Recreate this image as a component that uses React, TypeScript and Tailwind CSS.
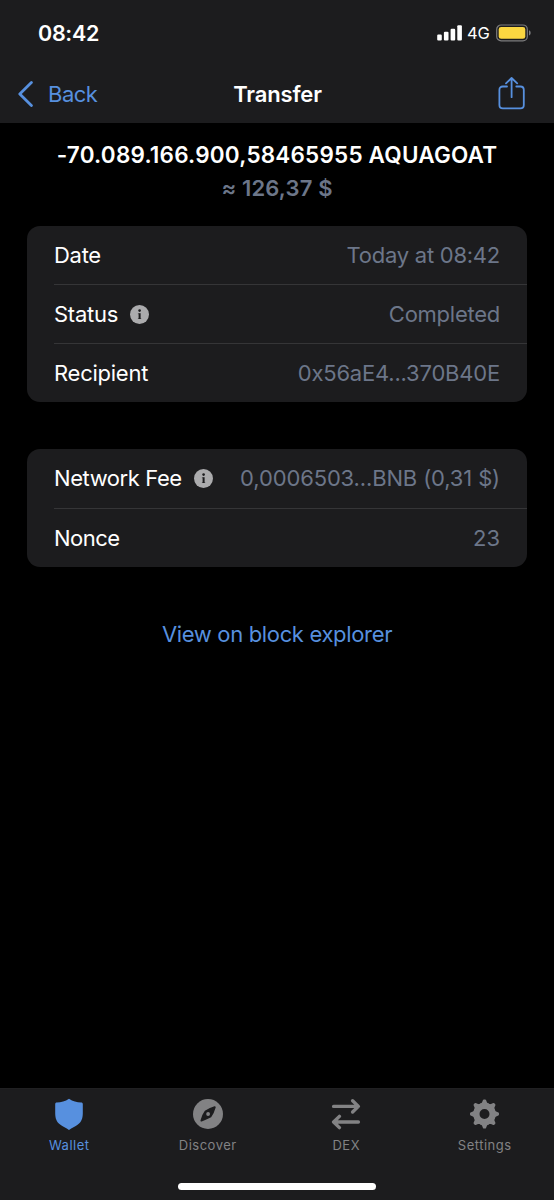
import type { ReactNode } from "react";

interface RowProps {
  label: string;
  value: string;
  info?: boolean;
  labelClass?: string;
  valueClass?: string;
}

function InfoIcon() {
  return (
    <svg width="19" height="19" viewBox="0 0 19 19" className="ml-[12px]">
      <circle cx="9.5" cy="9.5" r="9.5" fill="#ababad" />
      <circle cx="9.6" cy="5.6" r="1.3" fill="#1c1c1e" />
      <path d="M8.6 8.200h2v5.800h-2z" fill="#1c1c1e" />
      <path d="M7.900 8.200h1v1h-1zM7.900 13h3.300v1H7.900z" fill="#1c1c1e" fillOpacity="0.5" />
    </svg>
  );
}

function Row({ label, value, info, labelClass = "", valueClass = "" }: RowProps) {
  return (
    <div className="flex flex-1 items-center justify-between border-t border-[#353537] pr-[27px] first:border-t-0">
      <div className="flex items-center">
        <span className={`text-white ${labelClass}`}>{label}</span>
        {info && <InfoIcon />}
      </div>
      <span className={`text-[#6c7689] ${valueClass}`}>{value}</span>
    </div>
  );
}

function StatusBar() {
  return (
    <div className="flex h-[66px] items-center justify-between pr-[22px] pl-[38px]">
      <span className="text-[21.5px] font-semibold tracking-[-0.3px] text-white">08:42</span>
      <div className="flex items-center">
        <svg width="26" height="16" viewBox="0 0 26 16" fill="#fff">
          <rect x="0.2" y="9.6" width="4.6" height="6" rx="1.1" />
          <rect x="6.9" y="6.7" width="4.6" height="8.9" rx="1.1" />
          <rect x="13.6" y="3.8" width="4.6" height="11.8" rx="1.1" />
          <rect x="20.3" y="0.2" width="4.6" height="15.4" rx="1.1" />
        </svg>
        <span className="mt-px ml-[4px] w-[23px] text-[16.5px] leading-none tracking-[-0.2px] whitespace-nowrap text-white">4G</span>
        <svg width="36" height="18" viewBox="0 0 36 18" className="ml-[6px]">
          <rect x="0.7" y="1" width="30.6" height="15.8" rx="4.4" fill="none" stroke="#7c7c7e" strokeWidth="1.2" />
          <rect x="2.7" y="3" width="26.6" height="11.8" rx="2.4" fill="#fbd741" />
          <path d="M33 6.3c2.2.8 2.2 4.4 0 5.2z" fill="#7c7c7e" />
        </svg>
      </div>
    </div>
  );
}

function NavBar() {
  return (
    <div className="grid h-[56px] grid-cols-[1fr_auto_1fr] items-center pr-[29px] pl-[18px]">
      <div className="flex items-center text-[#5790df]">
        <svg width="16" height="28" viewBox="0 0 16 28" fill="none" stroke="currentColor" strokeWidth="2.8" strokeLinecap="round" strokeLinejoin="round">
          <path d="M13.4 2.6L1.8 14l11.6 11.4" />
        </svg>
        <span className="ml-[14px] tracking-[-0.5px]">Back</span>
      </div>
      <span className="pl-[12px] font-semibold tracking-[-0.15px] text-white">Transfer</span>
      <svg width="27" height="34" viewBox="0 0 27 34" fill="none" stroke="#5790df" strokeWidth="1.8" strokeLinecap="round" strokeLinejoin="round" className="justify-self-end">
        <path d="M9 9.500H4.800C2.700 9.500 1.400 10.800 1.400 12.900v15.100c0 2.1 1.3 3.4 3.4 3.4h17.600c2.1 0 3.4-1.3 3.4-3.4V12.900c0-2.1-1.3-3.4-3.4-3.4h-4.100" />
        <path d="M13.600 20.2V1.200M8 6.400l5.600-5.400 5.600 5.400" />
      </svg>
    </div>
  );
}

function Tab({ label, active, children }: { label: string; active?: boolean; children: ReactNode }) {
  return (
    <div className={`flex flex-col items-center ${active ? "text-[#5790df]" : "text-[#828284]"}`}>
      {children}
      <span className="mt-[5px] text-[13px] leading-[20px] tracking-[0.5px]">{label}</span>
    </div>
  );
}

function TabBar() {
  return (
    <div className="flex h-[112px] flex-col items-center border-t border-[#202022] bg-[#1c1c1e] pt-[9px]">
      <div className="grid w-full grid-cols-4">
        <Tab label="Wallet" active>
          <svg width="32" height="32" viewBox="0 0 32 32" fill="currentColor">
            <path d="M16 .8c3.8 2.6 7.9 3.7 12.2 3.7 1 0 1.6.6 1.6 1.6v9.2c0 5.2-1.4 8.6-4.9 11.3-2.7 2-6.1 3.4-8.9 5.400-2.8-2-6.200-3.400-8.900-5.400-3.500-2.700-4.900-6.100-4.900-11.300V6.100c0-1 .6-1.600 1.600-1.600C8.100 4.500 12.200 3.400 16 .8z" />
          </svg>
        </Tab>
        <Tab label="Discover">
          <svg width="32" height="32" viewBox="0 0 32 32" fill="currentColor">
            <circle cx="16" cy="16" r="15" />
            <path d="M22.800 9.200Q21 15.500 18.600 18.500Q15 20.500 9.400 22.600Q11 16.500 13.400 13.500Q17 11 22.800 9.200z" fill="#1c1c1e" stroke="#1c1c1e" strokeWidth="1.8" strokeLinejoin="round" />
            <circle cx="16.100" cy="16" r="1.900" />
          </svg>
        </Tab>
        <Tab label="DEX">
          <svg width="32" height="32" viewBox="0 0 32 32" fill="none" stroke="currentColor" strokeWidth="3.4" strokeLinecap="round" strokeLinejoin="round">
            <path d="M3.600 8.400h24.600M22.600 2.800l5.800 5.600-5.800 5.600" />
            <path d="M28.400 24H3.800M9.400 18.400L3.600 24l5.800 5.600" />
          </svg>
        </Tab>
        <Tab label="Settings">
          <svg width="32" height="32" viewBox="0.5 0 32 32" fill="none">
            <circle cx="16" cy="16" r="8" stroke="currentColor" strokeWidth="6" />
            <g fill="currentColor" stroke="currentColor" strokeWidth="2" strokeLinejoin="round">
              {[0, 45, 90, 135, 180, 225, 270, 315].map((angle) => (
                <path key={angle} d="M15.400 2.500h1.200l1.200 2.800 2.100 1.400h-7.800l2.100-1.400z" transform={`rotate(${angle} 16 16)`} />
              ))}
            </g>
          </svg>
        </Tab>
      </div>
      <div className="mt-[27.5px] h-[7px] w-[198px] rounded-full bg-white" />
    </div>
  );
}

export default function App() {
  return (
    <div className="flex h-[1200px] w-[554px] flex-col bg-black font-['Inter',sans-serif] text-[22px] leading-[30px]">
      <header className="h-[123px] bg-[#1c1c1e]">
        <StatusBar />
        <NavBar />
      </header>

      <main className="flex flex-1 flex-col px-[27px]">
        <div className="mt-[17px] text-center text-[22.5px] font-semibold tracking-[0.2px] whitespace-nowrap text-white">
          -70.089.166.900,58465955 AQUAGOAT
        </div>
        <div className="mt-[3px] text-center font-semibold tracking-[0.15px] text-[#6c7689]">≈ 126,37 $</div>

        <section className="mt-[23px] flex h-[176px] flex-col rounded-[13px] bg-[#1c1c1e] pl-[27px]">
          <Row label="Date" value="Today at 08:42" labelClass="tracking-[-0.3px]" valueClass="tracking-[-0.25px]" />
          <Row label="Status" value="Completed" info labelClass="tracking-[-0.25px]" valueClass="tracking-[-0.25px]" />
          <Row label="Recipient" value="0x56aE4...370B40E" labelClass="tracking-[-0.25px]" valueClass="tracking-[-0.2px]" />
        </section>

        <section className="mt-[47px] flex h-[118px] flex-col rounded-[13px] bg-[#1c1c1e] pl-[27px]">
          <Row label="Network Fee" value="0,0006503...BNB (0,31 $)" info labelClass="tracking-[-0.42px]" valueClass="tracking-[-0.14px]" />
          <Row label="Nonce" value="23" labelClass="tracking-[-0.5px]" />
        </section>

        <button className="mt-[52px] self-center tracking-[-0.34px] text-[#5790df]">View on block explorer</button>
      </main>

      <TabBar />
    </div>
  );
}
